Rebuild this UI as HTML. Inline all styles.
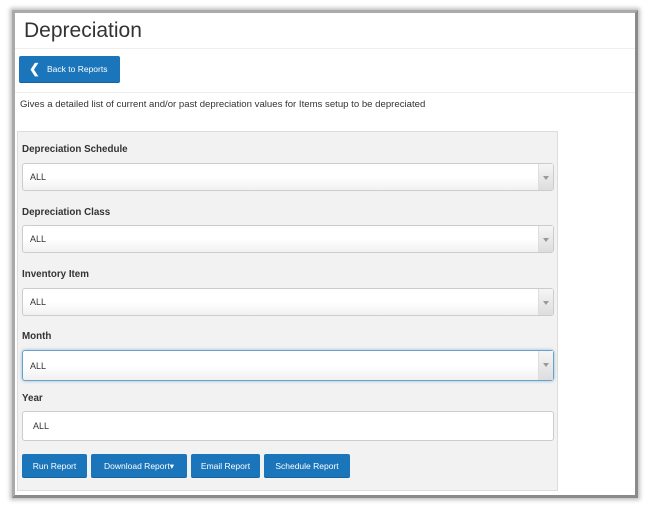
<!DOCTYPE html>
<html><head><style>
body{margin:0;width:651px;height:511px;background:#fff;font-family:"Liberation Sans",sans-serif;position:relative;overflow:hidden}
.frame{position:absolute;left:12px;top:10px;width:620px;height:482px;border:3px solid #8a8a8a;box-shadow:0 0 4px 2px rgba(0,0,0,.25);background:#fff;border-top-color:#aaa;border-left-color:#aaa}
.a{position:absolute}
h1{position:absolute;left:9px;top:6px;margin:0;font-size:21px;font-weight:normal;color:#333}
.hr{position:absolute;left:0;right:0;height:1px;background:#eee}
.btn{position:absolute;background:#1a75bb;color:#fff;border-radius:2px;font-size:8.5px;text-align:center;box-shadow:inset 0 -1px 0 rgba(0,0,0,.15)}
.panel{position:absolute;left:2px;top:118px;width:539px;height:358px;background:#f2f2f2;border:1px solid #ddd}
.lbl{position:absolute;left:4px;font-size:9.8px;font-weight:bold;color:#333}
.sel{position:absolute;left:4px;width:532px;height:28px;border:1px solid #ccc;border-radius:3px;background:linear-gradient(#fff 50%,#f1f1f1);font-size:9px;color:#333;box-sizing:border-box}
.sel span{position:absolute;left:7px;top:8px}
.sel i{position:absolute;right:0;top:0;bottom:0;width:14px;border-left:1px solid #ddd;background:linear-gradient(#f5f5f5,#ddd)}
.sel i:after{content:"";position:absolute;left:4px;top:12px;border:3px solid transparent;border-top:4px solid #999}
</style></head><body>
<div class="frame">
<h1>Depreciation</h1>
<div class="hr" style="top:35px"></div>
<div class="btn" style="left:4px;top:43px;width:101px;height:27px;line-height:27px"><span style="font-size:13px;font-weight:bold;position:absolute;left:10px;top:-1px">&#10094;</span><span style="position:absolute;left:28px">Back to Reports</span></div>
<div class="hr" style="top:79px"></div>
<div class="a" style="left:5px;top:86px;font-size:9.6px;color:#333">Gives a detailed list of current and/or past depreciation values for Items setup to be depreciated</div>
<div class="panel">
<div class="lbl" style="top:12px">Depreciation Schedule</div>
<div class="sel" style="top:31px"><span>ALL</span><i></i></div>
<div class="lbl" style="top:75px">Depreciation Class</div>
<div class="sel" style="top:93px"><span>ALL</span><i></i></div>
<div class="lbl" style="top:137px">Inventory Item</div>
<div class="sel" style="top:156px"><span>ALL</span><i></i></div>
<div class="lbl" style="top:199px">Month</div>
<div class="sel" style="top:218px;height:31px;border-color:#66a3cc;box-shadow:0 0 3px rgba(60,130,190,.5)"><span style="top:10px">ALL</span><i></i></div>
<div class="lbl" style="top:261px">Year</div>
<div class="sel" style="top:279px;height:30px;background:#fff"><span style="left:10px;top:9px">ALL</span></div>
<div class="btn" style="left:4px;top:322px;width:65px;height:24px;line-height:24px">Run Report</div>
<div class="btn" style="left:73px;top:322px;width:96px;height:24px;line-height:24px">Download Report&#9662;</div>
<div class="btn" style="left:173px;top:322px;width:69px;height:24px;line-height:24px">Email Report</div>
<div class="btn" style="left:246px;top:322px;width:86px;height:24px;line-height:24px">Schedule Report</div>
</div>
</div>
</body></html>
